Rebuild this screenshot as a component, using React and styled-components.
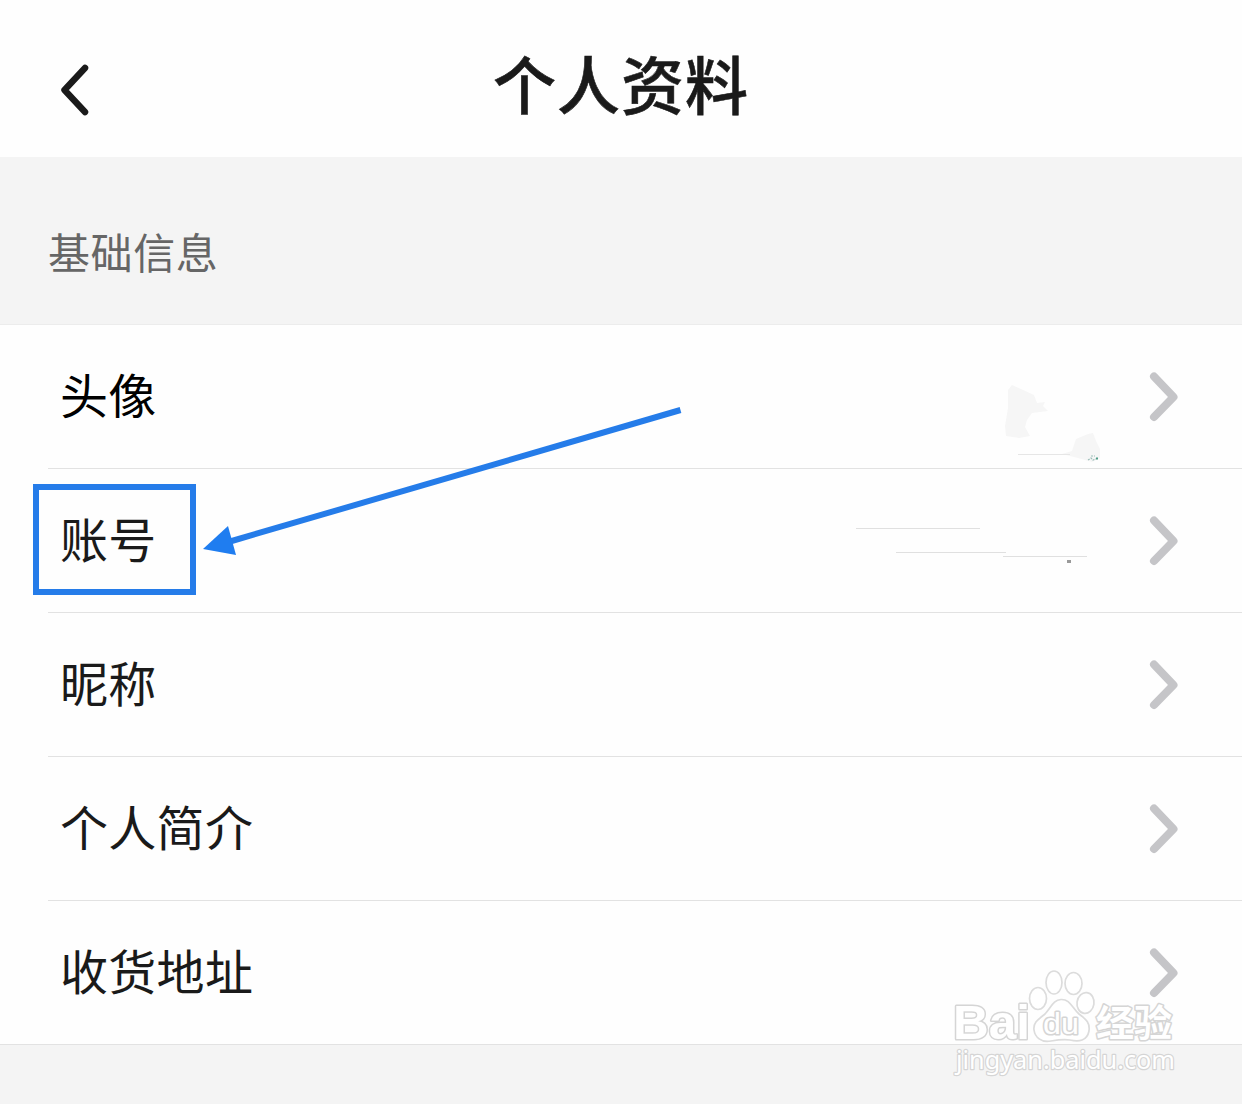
import React from 'react';
import styled, { createGlobalStyle } from 'styled-components';

const GlobalStyle = createGlobalStyle`
    body {
        margin: 0;
        background: #f4f4f4;
        font-family: 'Liberation Sans', 'Noto Sans CJK SC', sans-serif;
    }
`;

const Page = styled.div`
    position: relative;
    width: 1242px;
    height: 1104px;
    overflow: hidden;
    background: #f4f4f4;
`;

const Header = styled.header`
    display: grid;
    grid-template-columns: 150px 1fr 150px;
    align-items: center;
    height: 157px;
    background: #fefefe;
`;

const BackButton = styled.button`
    display: flex;
    margin: 22px 0 0 55px;
    padding: 0;
    border: 0;
    background: none;
    width: 40px;
`;

const Title = styled.h1`
    margin: 0;
    padding-top: 7px;
    color: #1a1a1a;
    font-family: 'Noto Sans CJK SC', sans-serif;
    font-size: 63px;
    font-weight: 500;
    line-height: 80px;
    letter-spacing: 1px;
    text-align: center;
    -webkit-text-stroke: 0.6px #1a1a1a;
`;

const SectionTitle = styled.h2`
    box-sizing: border-box;
    height: 168px;
    margin: 0;
    padding: 63px 48px 0;
    border-bottom: 1px solid #ececec;
    color: #666;
    font-family: 'Noto Sans CJK SC', sans-serif;
    font-size: 42px;
    font-weight: 400;
    line-height: 62px;
    letter-spacing: 0.6px;
`;

const List = styled.div`
    background: #fefefe;
`;

const Row = styled.div`
    box-sizing: border-box;
    display: flex;
    align-items: center;
    justify-content: space-between;
    height: 144px;
    margin-left: ${(props) => (props.$last ? 0 : '48px')};
    padding: 0 60px 0 ${(props) => (props.$last ? '60px' : '12px')};
    border-bottom: 1px solid #e2e2e2;
`;

const RowLabel = styled.span`
    padding-bottom: 8px;
    color: ${(props) => props.$color || '#1a1a1a'};
    font-family: 'Noto Sans CJK SC', sans-serif;
    font-size: 48px;
    line-height: 72px;
    letter-spacing: 0.3px;
`;

const Highlight = styled.div`
    position: absolute;
    box-sizing: border-box;
    top: 484px;
    left: 33px;
    width: 163px;
    height: 111px;
    border: 6px solid #257ce9;
`;

const Overlay = styled.svg`
    position: absolute;
    top: ${(props) => props.$top}px;
    left: ${(props) => props.$left}px;
    pointer-events: none;
`;

const rows = [
    { label: '头像', color: '#000' },
    { label: '账号' },
    { label: '昵称' },
    { label: '个人简介' },
    { label: '收货地址' },
];

function ChevronRight() {
    return (
        <svg width='36' height='56' viewBox='0 0 36 56' fill='none'>
            <path d='M8 7.5L27.500 28L8 48' stroke='#c5c5c8' strokeWidth='8' strokeLinecap='round' strokeLinejoin='round' />
        </svg>
    );
}

function Arrow() {
    return (
        <Overlay $top={390} $left={190} width='510' height='180'>
            <path d='M490.500 20L40 151.500' stroke='#257ce9' strokeWidth='6' />
            <path d='M13 159L38 136L46 165Z' fill='#1f7df0' />
        </Overlay>
    );
}

// leftovers of the erased avatar and account values
function Smudges() {
    return (
        <Overlay $top={350} $left={840} width='300' height='230'>
            <g fill='#f6f6f6'>
                <path d='M168 40L172 35L194 45L197 53L205 52L203 56L208 61L192 63L187 70L185 77L190 86L179 88L166 86L165 76L168 58Z' />
                <path d='M222 104L232 101L236 89L248 84L253 83L256 91L260 99L260 108L252 112L238 108Z' />
            </g>
            <path d='M178 104.500H230' stroke='#e6e6e6' />
            <path d='M16 178.500H140M56 202.500H166M163 206.500H247' stroke='#e0e0e0' />
            <path d='M248 110L251 108L253 110L256 109M251 106H255' stroke='#9bbdb8' strokeWidth='1.200' strokeDasharray='2 1' fill='none' />
            <rect x='256' y='107.500' width='2' height='2' fill='#4f9d87' />
            <rect x='227' y='210' width='4' height='3' fill='#9a9a9a' />
        </Overlay>
    );
}

function Watermark() {
    return (
        <Overlay $top={960} $left={940} width='250' height='130'>
            <g fill='#fff' stroke='#dcdcdc' strokeWidth='1.700'>
                <ellipse cx='98' cy='38.500' rx='8.500' ry='11' />
                <ellipse cx='114' cy='22.500' rx='8' ry='11.500' />
                <ellipse cx='133.500' cy='23.500' rx='8.500' ry='11' />
                <ellipse cx='145.500' cy='43' rx='8.500' ry='10.500' transform='rotate(8 145.500 43)' />
                <path d='M121 39.500C130 39 132 48 139 54C147 60 150 63 149 71C147 81 139 82 130 80C123 79 117 80 111 81C101 83 95 77 94 70C93 62 99 59 105 54C111 48 113 40 121 39.500Z' />
            </g>
            <g fill='#fff' stroke='#d5d5d5' strokeWidth='3' strokeLinejoin='round' paintOrder='stroke' fontFamily='"Liberation Sans", "Noto Sans CJK SC", sans-serif'>
                <text x='13' y='79' fontSize='49' fontWeight='700' textLength='77' lengthAdjust='spacingAndGlyphs'>Bai</text>
                <text x='103' y='74' fontSize='30' fontWeight='400' textLength='36' lengthAdjust='spacingAndGlyphs'>du</text>
                <text x='156' y='77' fontSize='37' fontWeight='700' textLength='76' lengthAdjust='spacingAndGlyphs'>经验</text>
                <text x='16' y='109' fontSize='25' strokeWidth='2.400' fontFamily='"Noto Sans", sans-serif' textLength='219' lengthAdjust='spacingAndGlyphs'>jingyan.baidu.com</text>
            </g>
        </Overlay>
    );
}

function App() {
    return (
        <Page>
            <GlobalStyle />
            <Header>
                <BackButton aria-label='返回'>
                    <svg width='40' height='56' viewBox='0 0 40 56' fill='none'>
                        <path d='M30 6L9.500 28L30 50' stroke='#1a1a1a' strokeWidth='6.500' strokeLinecap='round' strokeLinejoin='round' />
                    </svg>
                </BackButton>
                <Title>个人资料</Title>
            </Header>
            <SectionTitle>基础信息</SectionTitle>
            <List>
                {rows.map((row, i) => (
                    <Row key={row.label} $last={i === rows.length - 1}>
                        <RowLabel $color={row.color}>{row.label}</RowLabel>
                        <ChevronRight />
                    </Row>
                ))}
            </List>
            {/* annotations */}
            <Highlight />
            <Arrow />
            <Smudges />
            <Watermark />
        </Page>
    );
}

export default App;
